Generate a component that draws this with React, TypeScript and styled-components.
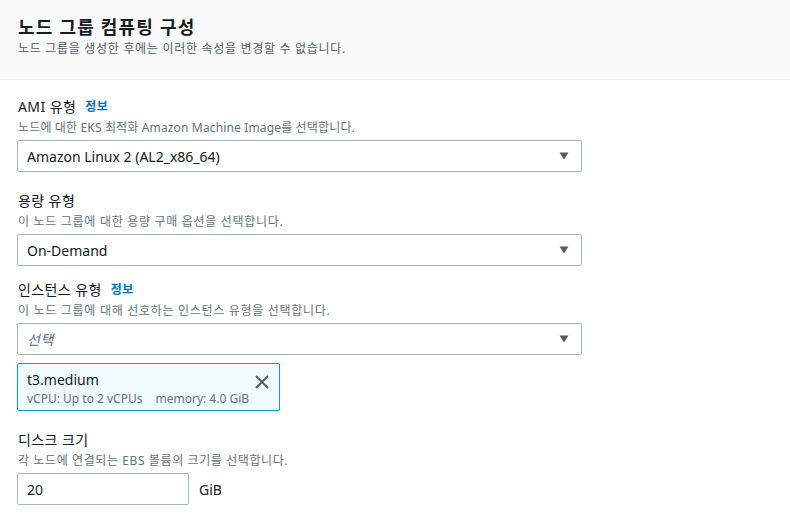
import * as React from "react";
import styled, { createGlobalStyle } from "styled-components";

const GlobalStyle = createGlobalStyle`
    html, body {
        margin: 0;
        padding: 0;
        background: #ffffff;
    }
    body {
        font-family: "Noto Sans", "Noto Sans CJK KR", Arial, sans-serif;
        color: #16191f;
    }
`;

const Panel = styled.div`
    width: 790px;
`;

const Header = styled.div`
    background: #fafafa;
    border-bottom: 1px solid #eaeded;
    padding: 15px 18px 22px;
`;

const Title = styled.h2`
    margin: 0;
    font-size: 18px;
    line-height: 24px;
    font-weight: 700;
    letter-spacing: 1.2px;
`;

const Subtitle = styled.div`
    margin-top: 2px;
    font-size: 12px;
    line-height: 16px;
    color: #545b64;
    letter-spacing: 0.7px;
`;

const Body = styled.div`
    padding: 17px 18px 0 17px;
`;

const Field = styled.div<{ $gap?: number }>`
    margin-top: ${p => (p.$gap !== undefined ? p.$gap : 0)}px;
`;

const Label = styled.div`
    display: flex;
    align-items: center;
    gap: 9px;
    padding-left: 1px;
    font-size: 14px;
    line-height: 20px;
    letter-spacing: 0.4px;
`;

const InfoLink = styled.span`
    color: #0073bb;
    font-weight: 700;
    font-size: 12px;
`;

const Description = styled.div<{ $spacing?: number }>`
    margin-top: 2px;
    padding-left: 1px;
    font-size: 12px;
    line-height: 18px;
    color: #687078;
    letter-spacing: ${p => (p.$spacing !== undefined ? p.$spacing : 0.7)}px;
`;

const Select = styled.div`
    margin-top: 3px;
    width: 565px;
    height: 32px;
    box-sizing: border-box;
    border: 1px solid #aab7b8;
    border-radius: 2px;
    display: flex;
    align-items: center;
    justify-content: space-between;
    padding: 0 12px 0 9px;
    font-size: 14px;
    background: #fff;
`;

const Placeholder = styled.span`
    font-style: italic;
    color: #687078;
    letter-spacing: 0.5px;
`;

const Token = styled.div`
    margin-top: 8px;
    width: 263px;
    height: 48px;
    box-sizing: border-box;
    border: 1px solid #00a1c9;
    border-radius: 2px;
    background: #f1faff;
    display: flex;
    justify-content: space-between;
    padding: 6px 9px 0 9px;
`;

const TokenName = styled.div`
    font-size: 14px;
    line-height: 20px;
`;

const TokenMeta = styled.div`
    display: flex;
    gap: 13px;
    font-size: 12px;
    line-height: 16px;
    color: #687078;
    margin-top: 1px;
`;

const Dismiss = styled.div`
    padding-top: 3px;
`;

const InputRow = styled.div`
    margin-top: 3px;
    display: flex;
    align-items: center;
    gap: 10px;
`;

const Input = styled.div`
    width: 172px;
    height: 32px;
    box-sizing: border-box;
    border: 1px solid #aab7b8;
    border-radius: 2px;
    display: flex;
    align-items: center;
    padding-left: 9px;
    font-size: 14px;
`;

const Unit = styled.span`
    font-size: 14px;
`;

function Caret() {
    return (
        <svg width="10" height="8" viewBox="0 0 10 8">
            <path d="M0.5 0.5 H9.5 L5 7.5 Z" fill="#545b64" />
        </svg>
    );
}

function Close() {
    return (
        <svg width="16" height="16" viewBox="0 0 16 16">
            <path d="M2 2 L14 14 M14 2 L2 14" stroke="#545b64" strokeWidth="2" fill="none" />
        </svg>
    );
}

export default function App() {
    return (
        <>
            <GlobalStyle />
            <Panel>
                <Header>
                    <Title>노드 그룹 컴퓨팅 구성</Title>
                    <Subtitle>노드 그룹을 생성한 후에는 이러한 속성을 변경할 수 없습니다.</Subtitle>
                </Header>
                <Body>
                    <Field>
                        <Label>
                            AMI 유형 <InfoLink>정보</InfoLink>
                        </Label>
                        <Description $spacing={0.15}>
                            노드에 대한 EKS 최적화 Amazon Machine Image를 선택합니다.
                        </Description>
                        <Select>
                            <span>Amazon Linux 2 (AL2_x86_64)</span>
                            <Caret />
                        </Select>
                    </Field>
                    <Field $gap={19}>
                        <Label>용량 유형</Label>
                        <Description>이 노드 그룹에 대한 용량 구매 옵션을 선택합니다.</Description>
                        <Select>
                            <span>On-Demand</span>
                            <Caret />
                        </Select>
                    </Field>
                    <Field $gap={14}>
                        <Label>
                            인스턴스 유형 <InfoLink>정보</InfoLink>
                        </Label>
                        <Description>이 노드 그룹에 대해 선호하는 인스턴스 유형을 선택합니다.</Description>
                        <Select>
                            <Placeholder>선택</Placeholder>
                            <Caret />
                        </Select>
                        <Token>
                            <div>
                                <TokenName>t3.medium</TokenName>
                                <TokenMeta>
                                    <span>vCPU: Up to 2 vCPUs</span>
                                    <span>memory: 4.0 GiB</span>
                                </TokenMeta>
                            </div>
                            <Dismiss>
                                <Close />
                            </Dismiss>
                        </Token>
                    </Field>
                    <Field $gap={19}>
                        <Label>디스크 크기</Label>
                        <Description $spacing={0.6}>각 노드에 연결되는 EBS 볼륨의 크기를 선택합니다.</Description>
                        <InputRow>
                            <Input>20</Input>
                            <Unit>GiB</Unit>
                        </InputRow>
                    </Field>
                </Body>
            </Panel>
        </>
    );
}
